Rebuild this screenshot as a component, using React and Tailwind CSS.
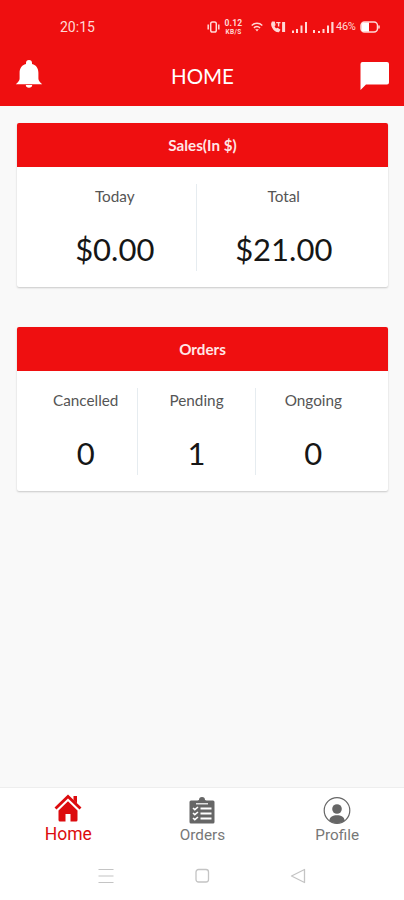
import React from "react";

const sales = [
  { label: "Today", value: "$0.00", width: "w-[162px]" },
  { label: "Total", value: "$21.00", width: "w-[175px]" },
];

const orders = [
  { label: "Cancelled", value: "0", width: "w-[104px]" },
  { label: "Pending", value: "1", width: "w-[117px]" },
  { label: "Ongoing", value: "0", width: "w-[116px]" },
];

const StatusBar = () => {
  return (
    <div className="flex h-[52px] items-center justify-between pl-[60px] pr-[24px] pt-[2px] text-[#ffd9d6]">
      <span className="font-[Roboto] text-[14px]">20:15</span>
      <div className="flex items-center">
        <svg width="13" height="12" viewBox="0 0 13 12" fill="none" stroke="currentColor" strokeWidth="1.5">
          <rect x="3.7" y="1" width="5.6" height="10" rx="1.8" />
          <path d="M1.2 3.5v5M11.8 3.5v5" />
        </svg>
        <div className="ml-[4px] w-[19px] text-center font-[Roboto] font-bold">
          <div className="text-[8.5px] leading-[9px] tracking-[0.2px]">0.12</div>
          <div className="text-[6.5px] leading-[8px] tracking-[0.3px]">KB/S</div>
        </div>
        <svg className="ml-[8px]" width="12" height="10" viewBox="0 0 12 10" fill="none" stroke="currentColor" strokeWidth="1.4">
          <path d="M.7 3.4C3.7.5 8.3.5 11.3 3.4M2.9 5.9c1.8-1.7 4.4-1.7 6.2 0" />
          <path d="M4.2 7.2h3.6L6 9.6z" fill="currentColor" stroke="none" />
        </svg>
        <svg className="ml-[7px]" width="16" height="12" viewBox="0 0 16 12" fill="none" stroke="currentColor">
          <path d="M2.3 1C.4 4.4 3.8 10.5 8.6 10.8l1.2-2-2.3-1.5-1.3.8C4.8 7.2 4 5.9 3.8 4.7l1.2-.8L4.3 1.1z" strokeWidth="1.1" fill="currentColor" />
          <path d="M6.2 1.6h4.3M8.6 1.6v4" strokeWidth="1.4" />
          <path d="M13.6 1v10" strokeWidth="3" />
        </svg>
        <svg className="ml-[6px]" width="16" height="12" viewBox="0 0 16 12" fill="currentColor">
          <path d="M0 9.5h2V12H0zM4 8h2v4H4zM8.5 4.5h2V12h-2zM13 1h2v11h-2z" />
        </svg>
        <svg className="ml-[5px]" width="21" height="12" viewBox="0 0 21 12" fill="currentColor">
          <path d="M0 9h2v3H0zM5 10h2v2H5zM9.5 8h2v4h-2zM14 4.5h2V12h-2zM18.3 1h2.2v11h-2.2z" />
        </svg>
        <span className="ml-[2px] w-[21px] font-[Roboto] text-[11px] tracking-[-0.3px]">46%</span>
        <svg className="ml-[3px]" width="20" height="12" viewBox="0 0 20 12" fill="none">
          <rect x="1" y="1" width="16.5" height="10" rx="3.5" stroke="currentColor" strokeWidth="1.5" />
          <path d="M4 1.5h5v9H4A2.5 2.5 0 0 1 1.5 8V4A2.5 2.5 0 0 1 4 1.5z" fill="white" />
          <path d="M19 4.5v3" stroke="currentColor" strokeWidth="1.5" />
        </svg>
      </div>
    </div>
  );
};

const Header = () => {
  return (
    <header className="h-[106px] bg-[#ef0f10] text-white">
      <StatusBar />
      <div className="grid h-[48px] grid-cols-3 items-center px-[15px]">
        <svg className="-mt-[4px] w-[28px]" height="30" viewBox="0 0 28 30" fill="currentColor">
          <path d="M14 1a3 3 0 0 0-3 3v1C6.6 6 4.6 9.500 4.600 13.800v5.700c0 2.100-1.300 3.500-3.800 5.800h26.400c-2.500-2.300-3.800-3.700-3.800-5.800v-5.700c0-4.300-2-7.800-6.400-8.800V4A3 3 0 0 0 14 1z" />
          <path d="M10.8 26h6.400c0 1.800-1.400 2.700-3.200 2.700s-3.200-.9-3.200-2.700z" />
        </svg>
        <h1 className="pl-px text-center text-[20.5px] leading-[28px]">HOME</h1>
        <svg className="justify-self-end" width="30" height="30" viewBox="0 0 30 30" fill="currentColor">
          <path d="M3.500 1h24.500a2 2 0 0 1 2 2v18.500a2 2 0 0 1-2 2H7L1.500 29V3a2 2 0 0 1 2-2z" />
        </svg>
      </div>
    </header>
  );
};

const StatCard = ({ title, stats }) => {
  return (
    <section className="h-[164px] overflow-hidden rounded-[2px] bg-white shadow-[0_1px_2px_rgba(0,0,0,0.2)]">
      <h2 className="flex h-[44px] items-center justify-center bg-[#ef0f10] text-[15.2px] font-bold text-[#ffe6e6]">
        {title}
      </h2>
      <div className="mx-[17px] mt-[17px] flex h-[87px]">
        {stats.map((stat, index) => (
          <React.Fragment key={stat.label}>
            {index > 0 && <div className="w-px shrink-0 bg-[#e6ecf0]" />}
            <div className={`${stat.width} text-center`}>
              <div className="text-[15.3px] leading-[24px] text-[#555555]">{stat.label}</div>
              <div className="mt-[21px] text-[31px] leading-[40px] text-[#161616]">{stat.value}</div>
            </div>
          </React.Fragment>
        ))}
      </div>
    </section>
  );
};

const HomeIcon = () => (
  <svg width="28" height="28" viewBox="0 0 28 28">
    <path d="M1.5 14.5 14 2.5l12.5 12" fill="none" stroke="currentColor" strokeWidth="2.8" />
    <path d="M19.5 2H23v7.5l-3.5-3.4z" fill="currentColor" />
    <path d="M14 7.3 4.5 16.4V26A1.5 1.5 0 0 0 6 27.5h5.5V20h5v7.5H22a1.5 1.5 0 0 0 1.5-1.5v-9.6z" fill="currentColor" />
  </svg>
);

const OrdersIcon = () => (
  <svg width="26" height="28" viewBox="0 0 26 28">
    <path d="M2 3.5h6.5L10 3a3 3 0 0 1 6 0l1.5.5H24A1.5 1.5 0 0 1 25.5 5v20a1.5 1.5 0 0 1-1.5 1.5H2A1.5 1.5 0 0 1 .5 25V5A1.5 1.5 0 0 1 2 3.5z" fill="currentColor" />
    <path d="M7 6.8h12" stroke="white" strokeWidth="1.2" />
    <path d="M11.5 11.5h11M11.5 16.5h11M11.5 21.5h11" stroke="white" strokeWidth="1.8" />
    <path d="m4 11 1.8 1.6L9 10M4 16l1.8 1.6L9 15M4 21l1.8 1.6L9 20" fill="none" stroke="white" strokeWidth="1.6" />
  </svg>
);

const ProfileIcon = () => (
  <svg width="28" height="28" viewBox="0 0 28 28">
    <circle cx="14" cy="13.5" r="12.8" fill="none" stroke="currentColor" strokeWidth="1.2" />
    <circle cx="14" cy="12" r="4.8" fill="currentColor" />
    <path d="M6.3 23.5c.5-3.600 3.500-5.200 7.700-5.200s7.200 1.600 7.700 5.200c-2 1.700-4.700 2.800-7.700 2.800s-5.700-1.100-7.700-2.800z" fill="currentColor" />
  </svg>
);

const BottomNav = () => {
  return (
    <nav className="grid h-[66px] grid-cols-3 border-t border-[#eeeeee] bg-white font-[Roboto] text-[#666666]">
      <div className="flex flex-col items-center pl-[2px] pt-[6px] text-[#dc0b0e]">
        <HomeIcon />
        <span className="text-[17.5px] leading-[24px]">Home</span>
      </div>
      <div className="flex flex-col items-center pl-px pt-[9px]">
        <OrdersIcon />
        <span className="text-[15.3px] leading-[20px] text-[#777777]">Orders</span>
      </div>
      <div className="flex flex-col items-center pl-px pt-[9px]">
        <ProfileIcon />
        <span className="text-[15.3px] leading-[20px] text-[#777777]">Profile</span>
      </div>
    </nav>
  );
};

const SystemBar = () => {
  return (
    <div className="flex h-[47px] items-start justify-between bg-white px-[98px] pt-[15px] text-[#c4c4c4]">
      <svg width="16" height="16" viewBox="0 0 16 16" stroke="currentColor" strokeWidth="1.2">
        <path d="M.5 1.5h15M.5 8h15M.5 14.5h15" />
      </svg>
      <svg width="16" height="16" viewBox="0 0 16 16" fill="none" stroke="currentColor" strokeWidth="1.3">
        <rect x="2" y="1.5" width="12.5" height="12.5" rx="2.5" />
      </svg>
      <svg width="16" height="16" viewBox="0 0 16 16" fill="none" stroke="currentColor" strokeWidth="1.3" strokeLinejoin="round">
        <path d="M14.5 1.5v13L1.5 8z" />
      </svg>
    </div>
  );
};

const App = () => {
  return (
    <div className="flex h-[900px] w-[404px] flex-col bg-[#f9f9f9] font-[Lato,sans-serif]">
      <Header />
      <main className="flex flex-1 flex-col gap-[40px] pl-[17px] pr-[16px] pt-[17px]">
        <StatCard title="Sales(In $)" stats={sales} />
        <StatCard title="Orders" stats={orders} />
      </main>
      <BottomNav />
      <SystemBar />
    </div>
  );
};

export default App;
